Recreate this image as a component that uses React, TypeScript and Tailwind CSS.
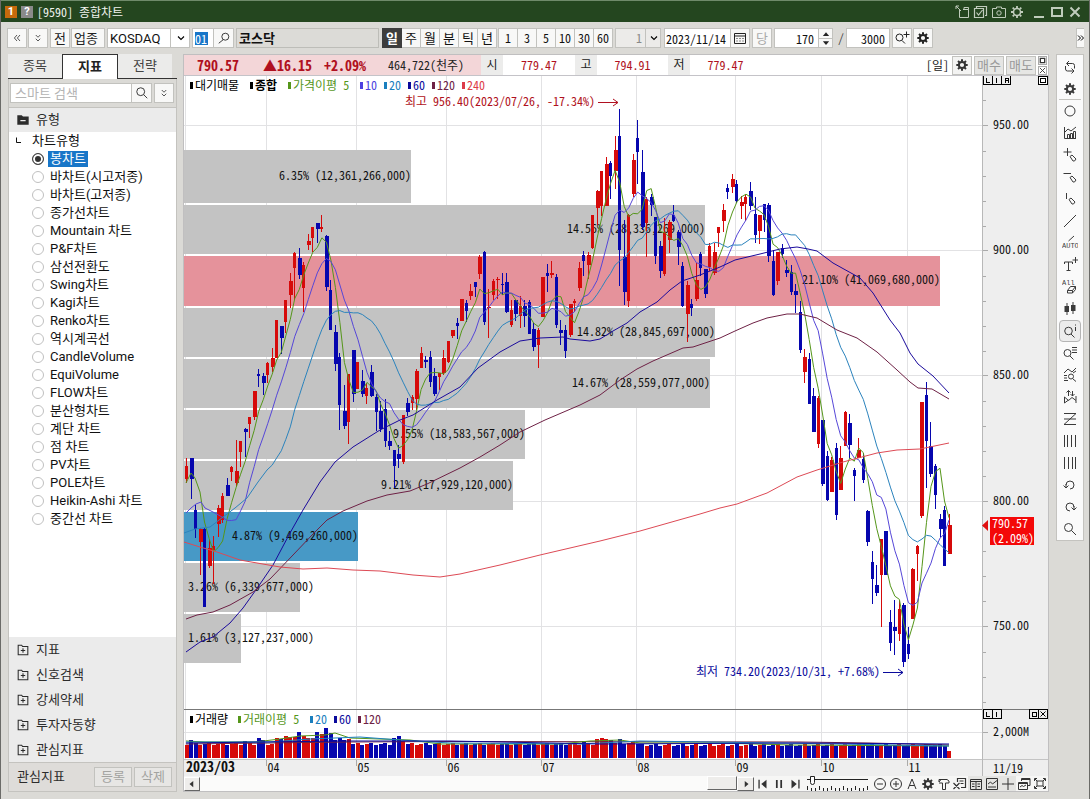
import React from "react";

type Candle = [up: 0 | 1, top: number, bottom: number, high: number, low: number];
type Point = [number, number];

const FIRST_X = 186.5;
const STEP = 4.512;
const xAt = (i: number) => FIRST_X + i * STEP;

const candles: Candle[] = [
  [1, 466, 479, 458, 483], [0, 458, 479, 458, 499], [0, 510, 529, 505, 538], [1, 529, 542, 528, 575], [0, 529, 607, 528, 607],
  [1, 548, 566, 540, 568], [1, 546, 550, 536, 584], [1, 508, 524, 505, 537], [1, 496, 520, 493, 523], [0, 485, 496, 478, 496],
  [1, 467, 472, 466, 481], [1, 471, 483, 440, 486], [1, 441, 452, 441, 467], [0, 429, 432, 428, 457], [1, 417, 424, 417, 438],
  [1, 391, 417, 391, 420], [0, 374, 376, 369, 387], [0, 376, 383, 373, 395], [1, 363, 375, 362, 383], [1, 358, 367, 348, 372],
  [1, 320, 358, 320, 358], [0, 326, 338, 326, 354], [1, 300, 322, 300, 333], [1, 281, 295, 273, 308], [1, 253, 268, 252, 300],
  [0, 258, 275, 248, 279], [1, 265, 288, 262, 312], [1, 241, 245, 234, 250], [1, 227, 238, 227, 252], [0, 223, 229, 223, 243],
  [1, 227, 229, 215, 232], [0, 236, 287, 235, 291], [0, 290, 330, 280, 330], [0, 332, 364, 325, 371], [0, 357, 405, 353, 430],
  [0, 411, 426, 385, 429], [1, 374, 422, 374, 444], [0, 350, 394, 350, 402], [1, 362, 389, 362, 389], [0, 381, 394, 370, 397],
  [1, 388, 396, 383, 404], [0, 372, 396, 365, 397], [0, 397, 412, 394, 431], [0, 411, 429, 401, 432], [0, 409, 441, 399, 447],
  [0, 441, 446, 431, 450], [0, 450, 466, 450, 488], [0, 454, 459, 445, 468], [1, 415, 462, 415, 464], [0, 403, 412, 398, 416],
  [1, 397, 403, 395, 410], [1, 371, 399, 369, 410], [1, 353, 368, 347, 368], [0, 360, 362, 356, 368], [0, 357, 382, 351, 387],
  [0, 376, 394, 368, 396], [1, 373, 377, 373, 390], [1, 358, 373, 350, 375], [1, 341, 362, 341, 363], [1, 330, 336, 330, 338],
  [0, 323, 326, 318, 339], [1, 299, 321, 299, 321], [0, 303, 311, 300, 322], [1, 291, 296, 284, 300], [0, 282, 287, 282, 297],
  [1, 257, 274, 255, 279], [0, 252, 322, 251, 325], [1, 307, 308, 289, 338], [1, 281, 295, 279, 300], [1, 279, 280, 277, 299],
  [0, 284, 285, 273, 295], [0, 282, 312, 273, 313], [1, 310, 325, 300, 327], [0, 300, 314, 300, 321], [1, 306, 316, 296, 328],
  [0, 306, 316, 300, 327], [0, 302, 334, 300, 334], [0, 329, 347, 323, 351], [1, 330, 345, 328, 368], [1, 277, 317, 277, 317],
  [0, 273, 276, 264, 292], [1, 273, 275, 261, 278], [0, 277, 325, 274, 328], [0, 330, 333, 320, 345], [0, 330, 351, 325, 358],
  [1, 304, 335, 304, 337], [1, 301, 303, 299, 312], [1, 268, 288, 262, 291], [0, 255, 261, 251, 276], [1, 255, 265, 252, 279],
  [1, 215, 248, 215, 249], [1, 191, 208, 190, 225], [1, 171, 206, 171, 216], [1, 164, 206, 157, 206], [0, 163, 176, 161, 199],
  [1, 150, 171, 136, 189], [0, 136, 250, 109, 286], [0, 257, 292, 220, 305], [1, 215, 301, 214, 307], [1, 160, 194, 154, 197],
  [0, 138, 152, 120, 184], [0, 172, 227, 150, 230], [1, 199, 223, 197, 257], [0, 197, 205, 194, 216], [0, 217, 256, 217, 264],
  [0, 246, 271, 241, 278], [1, 232, 274, 218, 276], [1, 222, 240, 220, 253], [0, 215, 221, 205, 222], [0, 232, 247, 230, 265],
  [0, 266, 306, 262, 307], [1, 285, 314, 281, 342], [0, 304, 308, 299, 316], [1, 280, 299, 263, 301], [0, 254, 268, 252, 276],
  [0, 269, 294, 269, 298], [1, 246, 267, 243, 271], [1, 252, 273, 243, 275], [1, 227, 233, 227, 247], [1, 210, 221, 204, 232],
  [0, 188, 192, 184, 199], [1, 179, 187, 174, 193], [0, 184, 201, 180, 203], [1, 202, 206, 196, 219], [1, 197, 204, 195, 221],
  [0, 191, 206, 182, 210], [0, 214, 235, 197, 243], [1, 215, 231, 215, 244], [0, 204, 220, 204, 232], [0, 205, 256, 203, 262],
  [0, 261, 295, 250, 296], [1, 252, 281, 252, 285], [0, 248, 254, 244, 258], [0, 270, 273, 260, 277], [0, 272, 292, 265, 295],
  [0, 291, 295, 284, 313], [0, 312, 350, 301, 353], [1, 357, 372, 349, 383], [0, 359, 404, 353, 404], [0, 396, 432, 388, 432],
  [1, 398, 444, 396, 448], [0, 420, 484, 420, 486], [0, 456, 500, 451, 501], [1, 460, 492, 457, 492], [0, 448, 515, 443, 520],
  [1, 458, 490, 446, 490], [1, 412, 446, 411, 446], [0, 423, 445, 414, 459], [0, 470, 476, 468, 501], [1, 450, 458, 438, 458],
  [0, 459, 480, 453, 483], [0, 511, 542, 510, 546], [0, 562, 579, 551, 604], [0, 585, 593, 565, 596], [1, 539, 575, 539, 627],
  [0, 531, 575, 531, 575], [0, 622, 643, 610, 651], [0, 627, 631, 600, 655], [1, 609, 634, 600, 641], [0, 605, 662, 603, 667],
  [0, 644, 654, 627, 659], [1, 569, 619, 568, 619], [1, 546, 554, 545, 581], [1, 402, 516, 402, 518], [0, 395, 441, 382, 488],
  [0, 446, 474, 422, 477], [0, 466, 495, 464, 509], [0, 519, 529, 514, 537], [0, 510, 566, 506, 566], [1, 525, 554, 514, 554],
];

const closes = candles.map(([up, top, bottom]) => (up ? top : bottom));

function average(period: number, lead: Point[]): Point[] {
  const pts: Point[] = [...lead];
  for (let i = period - 1; i < closes.length; i++) {
    const part = closes.slice(i - period + 1, i + 1);
    pts.push([xAt(i), part.reduce((a, b) => a + b, 0) / period]);
  }
  return pts;
}

const ma5 = average(5, [[186, 483], [191, 473], [195, 478], [200, 492]]);
const ma10 = average(10, [[186, 513], [191, 508], [196, 504], [201, 502], [205, 508], [213, 512], [222, 517]]);
const ma20 = average(20, [[184, 533], [195, 529], [210, 527], [223, 517], [235, 508], [247, 498], [258, 482], [267, 470]]);
const ma60: Point[] = [
  [186, 652], [200, 642], [213, 637], [230, 623], [243, 608], [258, 587], [273, 565], [290, 533], [303, 510], [320, 482], [335, 462],
  [353, 447], [380, 430], [400, 420], [413, 415], [437, 400], [460, 387], [478, 368], [500, 352], [520, 341], [540, 338], [563, 337],
  [570, 339], [590, 341], [600, 339], [613, 331], [627, 323], [640, 312], [657, 302], [670, 290], [682, 281], [700, 275], [720, 267],
  [735, 260], [760, 254], [780, 249], [797, 247], [808, 249], [817, 251], [833, 263], [860, 278], [873, 293], [890, 320], [900, 333],
  [910, 353], [918, 364], [933, 376], [949, 393],
];
const ma120: Point[] = [
  [186, 619], [197, 615], [213, 612], [230, 605], [253, 592], [270, 579], [293, 555], [313, 534], [327, 520], [343, 511], [367, 501],
  [387, 495], [410, 491], [427, 484], [460, 468], [480, 457], [500, 445], [520, 432], [545, 420], [580, 405], [600, 395], [620, 380],
  [637, 369], [653, 361], [683, 348], [693, 347], [720, 338], [735, 331], [753, 323], [767, 318], [787, 314], [800, 314], [817, 318],
  [837, 330], [857, 338], [877, 352], [897, 370], [910, 382], [918, 388], [932, 389], [949, 399],
];
const ma240: Point[] = [
  [184, 542], [200, 547], [217, 552], [240, 560], [257, 563], [280, 567], [303, 569], [327, 568], [353, 570], [380, 571], [413, 575],
  [440, 577], [460, 574], [500, 565], [540, 555], [600, 541], [640, 531], [700, 514], [720, 508], [737, 504], [767, 493], [797, 477],
  [817, 470], [843, 462], [877, 453], [897, 450], [920, 449], [949, 443],
];

const profile = [
  { y: 150, h: 53, end: 411, color: "#c3c3c3", text: "6.35% (12,361,266,000)" },
  { y: 205, h: 49, end: 705, color: "#c3c3c3", text: "14.56% (28,336,269,000)" },
  { y: 256, h: 50, end: 940, color: "#e5929b", text: "21.10% (41,069,680,000)" },
  { y: 308, h: 49, end: 715, color: "#c3c3c3", text: "14.82% (28,845,697,000)" },
  { y: 359, h: 49, end: 710, color: "#c3c3c3", text: "14.67% (28,559,077,000)" },
  { y: 410, h: 49, end: 525, color: "#c3c3c3", text: "9.55% (18,583,567,000)" },
  { y: 461, h: 49, end: 513, color: "#c3c3c3", text: "9.21% (17,929,120,000)" },
  { y: 512, h: 49, end: 358, color: "#4799c6", text: "4.87% (9,469,260,000)" },
  { y: 563, h: 49, end: 300, color: "#c3c3c3", text: "3.26% (6,339,677,000)" },
  { y: 614, h: 49, end: 241, color: "#c3c3c3", text: "1.61% (3,127,237,000)" },
];

const months: [number, string][] = [
  [266.5, "04"], [356.5, "05"], [446.5, "06"], [541.5, "07"], [636.5, "08"], [735.5, "09"], [821.5, "10"], [907.5, "11"],
];
const prices: [number, string][] = [[125.5, "950.00"], [250.5, "900.00"], [375.5, "850.00"], [501.5, "800.00"], [626.5, "750.00"]];

const tallVolumes: Record<number, number> = {
  1: 18, 13: 17, 16: 20, 17: 18, 20: 20, 21: 19, 22: 22, 23: 21, 24: 21, 25: 26, 26: 22, 27: 20, 28: 20, 29: 26, 30: 24, 31: 30,
  32: 25, 33: 18, 34: 20, 35: 18, 36: 19, 46: 20, 47: 22, 48: 17, 88: 17, 91: 19, 92: 20, 93: 19, 94: 18, 96: 19, 99: 17, 169: 7,
};
const volumeAt = (i: number) => tallVolumes[i] ?? 13 + ((i * 7 + (i % 5) * 3) % 3) - (i > 100 ? 1 : 0);

const toPath = (pts: Point[]) => pts.map(([x, y]) => `${x.toFixed(1)},${y.toFixed(1)}`).join(" ");

const HANGUL = "font-['Roboto','Noto_Sans_CJK_KR',sans-serif]";
const MONO = "font-['Noto_Sans_Mono_CJK_KR','Liberation_Sans_Narrow','Noto_Sans_CJK_KR',monospace]";

function Line({ pts, color }: { pts: Point[]; color: string }) {
  return <polyline points={toPath(pts)} fill="none" stroke={color} strokeWidth="1" />;
}

function Legend({ x, y, items }: { x: number; y: number; items: [number, string, string, boolean?][] }) {
  return (
    <>
      {items.map(([dx, color, label, bold]) => (
        <g key={label} fill={color}>
          <rect x={x + dx} y={y - 8} width="3" height="7" />
          <text x={x + dx + 5} y={y} fontWeight={bold ? 700 : 400}>{label}</text>
        </g>
      ))}
    </>
  );
}

function Chart() {
  const minor: number[] = [];
  for (let k = 0; k < 25; k++) if (k % 5 !== 1) minor.push(Math.round(100.4 + k * 25.05) + 0.5);
  return (
    <svg viewBox="184 76 864 700" className={`block h-auto w-full text-[12px] ${MONO}`} role="img" aria-label="코스닥 일봉 차트">
      <rect x="184" y="76" width="864" height="700" fill="#fff" />
      <rect x="983" y="76" width="65" height="700" fill="#eeeeee" />
      <rect x="184" y="759" width="864" height="17" fill="#eeeeee" />
      <g shapeRendering="crispEdges" stroke="#e2e2e4">
        {prices.map(([y]) => <line key={y} x1="184" x2="982" y1={y} y2={y} />)}
        <line x1="184" x2="982" y1="732.5" y2="732.5" />
        {months.map(([x]) => <line key={x} x1={x} x2={x} y1="76" y2="759" />)}
        <line x1="185.5" x2="185.5" y1="76" y2="759" />
      </g>
      <g shapeRendering="crispEdges">
        {profile.map((p) => <rect key={p.y} x="184" y={p.y} width={p.end - 184} height={p.h} fill={p.color} />)}
      </g>
      <g fill="#111">
        {profile.map((p) =>
          p.end < 320
            ? <text key={p.y} x="188" y={p.y + 28}>{p.text}</text>
            : <text key={p.y} x={p.end} y={p.y + (p.y === 150 ? 30 : 28)} textAnchor="end">{p.text}</text>
        )}
      </g>
      <g shapeRendering="crispEdges">
        {candles.map(([up, top, bottom, high, low], i) => {
          const x = Math.round(xAt(i) - 0.5);
          return (
            <g key={i} fill={up ? "#d60a0a" : "#0606ae"}>
              <rect x={x} y={high} width="1" height={low - high} />
              <rect x={x - 1} y={top} width={i % 2 ? 4 : 3} height={Math.max(1, bottom - top)} />
            </g>
          );
        })}
      </g>
      <Line pts={ma5} color="#55961a" />
      <Line pts={ma10} color="#5647d8" />
      <Line pts={ma20} color="#2b83bd" />
      <Line pts={ma60} color="#1a0a9c" />
      <Line pts={ma120} color="#6e2145" />
      <Line pts={ma240} color="#dd4a55" />

      <Legend x={190} y={90} items={[
        [0, "#000", "대기매물"], [60, "#000", "종합", true], [98, "#55961a", "가격이평 5"], [170, "#4d3fe0", "10"],
        [194, "#1b7fbe", "20"], [218, "#0a0a9c", "60"], [242, "#6e2145", "120"], [272, "#dd3c48", "240"],
      ]} />
      <text x="405" y="106" fill="#b01020">최고 956.40(2023/07/26, -17.34%)</text>
      <path d="M598 102.5H618M613 99l5 3.500l-5 3.500" fill="none" stroke="#b01020" />
      <text x="696" y="676" fill="#0a0a9c">최저 734.20(2023/10/31, +7.68%)</text>
      <path d="M883 672.500H903M898 669l5 3.500l-5 3.500" fill="none" stroke="#0a0a9c" />

      <g shapeRendering="crispEdges">
        {candles.map(([up], i) => (
          <rect key={i} x={Math.round(xAt(i)) - 2} y={758 - volumeAt(i)} width="4" height={volumeAt(i)} fill={up ? "#d60a0a" : "#0606ae"} />
        ))}
      </g>
      <Line color="#6e2145" pts={[[186, 744], [350, 742], [450, 741.5], [800, 742], [870, 743], [949, 745]]} />
      <Line color="#55961a" pts={[[186, 741], [205, 742], [255, 742], [280, 739], [300, 736], [325, 735], [335, 733], [350, 738], [380, 739], [410, 740], [440, 744], [560, 744], [590, 741], [620, 740], [640, 743], [720, 743], [790, 745], [949, 746]]} />
      <Line color="#1b7fbe" pts={[[186, 742], [270, 742], [310, 739], [360, 737], [400, 740], [450, 743], [580, 744], [640, 741], [780, 743], [949, 746]]} />
      <Line color="#0a0a9c" pts={[[186, 743], [340, 741], [450, 741], [600, 744], [800, 743], [949, 744]]} />
      <g shapeRendering="crispEdges" stroke="#777">
        <line x1="184" x2="1048" y1="709.5" y2="709.5" />
        <line x1="184" x2="1048" y1="759.5" y2="759.5" stroke="#c4c4c4" />
        <line x1="982.5" x2="982.5" y1="76" y2="776" stroke="#b8b8b8" />
        {prices.map(([y]) => <line key={y} x1="983" x2="988" y1={y} y2={y} stroke="#aaa" />)}
        {minor.map((y) => <line key={y} x1="983" x2="986" y1={y} y2={y} stroke="#aaa" />)}
        <line x1="983" x2="988" y1="732.5" y2="732.5" stroke="#aaa" />
        {months.map(([x]) => <line key={x} x1={x} x2={x} y1="760" y2="766" stroke="#aaa" />)}
      </g>
      <Legend x={190} y={724} items={[
        [0, "#000", "거래량"], [48, "#55961a", "거래이평 5"], [120, "#1b7fbe", "20"], [144, "#0a0a9c", "60"], [168, "#6e2145", "120"],
      ]} />
      <g fill="#111">
        {prices.map(([y, label]) => <text key={label} x="993" y={y + 3.500}>{label}</text>)}
        <text x="993" y="736">2,000M</text>
        <text x="993" y="773">11/19</text>
        <text x="186" y="772" className="text-[14px]" fontWeight="700">2023/03</text>
        {months.map(([x, label]) => <text key={label} x={x + 1} y="772">{label}</text>)}
      </g>
      <rect x="990" y="517" width="44" height="28" fill="#f40808" />
      <path d="M988 520v11l-6-5.500z" fill="#e01010" />
      <text fill="#fff">
        <tspan x="992" y="528">790.57</tspan>
        <tspan x="992" y="543">(2.09%)</tspan>
      </text>
      <g fill="none" stroke="#000" shapeRendering="crispEdges">
        <path d="M983.500 75.500h27v9h-27zM992.500 76v9M1001.500 76v9M986.500 78v4h3M996.500 78v5M1005.500 83v-5h3v2h-3M1008.500 81v2" />
        <path fill="#fff" d="M1038.500 76.500h9v8h-9z" />
        <path d="M1040.500 78.500h5v4h-5z" />
        <path d="M983.500 709.500h18v9h-18zM992.500 710v9M986.500 712v4h3M996.500 712v5" />
        <path d="M1029.500 709.500h18v9h-18zM1038.500 710v9M1032.500 712.500h4v4h-4z" />
        <path shapeRendering="auto" d="M1040.500 711.500l5 5M1045.500 711.500l-5 5" />
      </g>
    </svg>
  );
}

function Icon({ d, fill, size = 16, sw = 1, children }: { d?: string; fill?: string; size?: number; sw?: number; children?: React.ReactNode }) {
  return (
    <svg width={size} height={size} viewBox="0 0 16 16" fill="none" stroke="currentColor" strokeWidth={sw} className="shrink-0" aria-hidden="true">
      {d && <path d={d} />}
      {fill && <path d={fill} fill="currentColor" stroke="none" />}
      {children}
    </svg>
  );
}

function Gear({ size = 16 }: { size?: number }) {
  return (
    <Icon size={size}>
      <circle cx="8" cy="8" r="3.1" strokeWidth="2" />
      <path strokeWidth="2" d="M8 2.300v2M8 11.700v2M2.300 8h2M11.700 8h2M4 4l1.400 1.400M10.600 10.600L12 12M12 4l-1.400 1.400M5.400 10.600L4 12" />
    </Icon>
  );
}

const BTN = "flex h-5 items-center justify-center border border-[#c2c2be] bg-[#f8f8f7] text-[#222]";

const Mini = ({ children, y = 5.5 }: { children: string; y?: number }) => (
  <text x="0" y={y} fontSize="7" fontFamily="Liberation Mono" fill="currentColor" stroke="none">{children}</text>
);

const sideTools: [string, React.ReactNode][] = [
  ["새로고침", <Icon key="i" d="M5 4.500h5.500a2 2 0 0 1 2 2v3M11 12H5.500a2 2 0 0 1-2-2V7M7 2L4.500 4.500L7 7M9.500 9.500L12 12l-2.500 2.500" />],
  ["설정", <Gear key="i" />],
  ["원", <Icon key="i"><circle cx="8" cy="8" r="5" /></Icon>],
  ["차트", <Icon key="i" d="M2.500 2v11.500H14M3 7l3-3l3 2l5-4M5.500 13V9.500h2V13M8.500 13V8.500h2V13M11.500 13V6.500h2V13" />],
  ["십자선", <Icon key="i" d="M5.500 1v8M1.500 5H9.500M8 9.500l2-1.500l4 4l-1.500 2h-1.500z" />],
  ["수평선", <Icon key="i" d="M1.500 4.500H9M8 8.500l2-1.500l4 4l-1.500 2h-1.500z" />],
  ["수직선", <Icon key="i" d="M4.500 2v6M7 8.500l2-1.500l4 4l-1.500 2h-1.500z" />],
  ["추세선", <Icon key="i" d="M2 14L14 2" />],
  ["자동추세선", <Icon key="i" d="M6.500 6L12 1"><Mini y={13}>AUTO</Mini></Icon>],
  ["문자", <Icon key="i" d="M2.500 7V5h8v2M6.500 5v8M4.500 13.500h4M13.500 0v6M10.500 3h6" />],
  ["전체삭제", <Icon key="i" d="M5.500 11.500l3-4h5l-3 4zM5.500 11.500v2.500h5v-2.500M10.500 14l3-3.500V7.500"><Mini>All</Mini></Icon>],
  ["봉", <Icon key="i" d="M5 2v12M11 1v12" fill="M2.500 5h4.500v6H2.500zM9 4h4.500v6H9z" />],
  ["정보", <Icon key="i" d="M9 11l3.500 3.500M13.500 4v4M13.500 1.500v1"><circle cx="6.500" cy="8" r="3.800" /></Icon>],
  ["목록보기", <Icon key="i" d="M8 11l3.500 3.500M10 2.500h5M10 5h5M10 7.500h5"><circle cx="5.500" cy="8" r="3.500" /></Icon>],
  ["지표검색", <Icon key="i" d="M2 6l4-4l4 3l4-4M2 8.500h3M2 11h3M2 13.500h4M11 12l3 2.500M11 6l3-2"><circle cx="9" cy="9.500" r="2.500" /></Icon>],
  ["비교", <Icon key="i" d="M2.500 14V8l4 3.500l3.500-3l4 3V7M2.500 14l4-3M6.500 7V1.500M4.500 3.500l2-2l2 2M10.500 2v5M8.500 5l2 2l2-2M14 11.500V14" />],
  ["분할", <Icon key="i" d="M2 2.500h12L2 13.500h12M2 8h12" />],
  ["세로선1", <Icon key="i" d="M2.500 2v12M5.500 2v12M9.500 2v12M13.500 2v12" />],
  ["세로선2", <Icon key="i" d="M2.500 2v12M6.500 2v12M10.500 2v12M13.500 2v12" />],
  ["되돌리기", <Icon key="i" d="M4 8a4 4 0 1 1 4 4M1.500 8.500l2.500 2.500l2.500-2.500M4 11V7" />],
  ["다시하기", <Icon key="i" d="M12 8a4 4 0 1 0-4 4M9.500 8.500l2.500 2.500l2.500-2.500M12 11V7" />],
  ["확대", <Icon key="i" d="M9.500 9.500L14 14"><circle cx="6.500" cy="6.500" r="4" /></Icon>],
];

const chartTypes = [
  "봉차트", "바차트(시고저종)", "바차트(고저종)", "종가선차트", "Mountain 차트", "P&F차트", "삼선전환도", "Swing차트", "Kagi차트", "Renko차트",
  "역시계곡선", "CandleVolume", "EquiVolume", "FLOW차트", "분산형차트", "계단 차트", "점 차트", "PV차트", "POLE차트", "Heikin-Ashi 차트", "중간선 차트",
];

const bottomIcons: [string, React.ReactNode, boolean?][] = [
  ["축소", <Icon key="i" d="M5 8h6"><circle cx="8" cy="8" r="5.500" /></Icon>],
  ["확대", <Icon key="i" d="M5 8h6M8 5v6"><circle cx="8" cy="8" r="5.500" /></Icon>],
  ["글자", <Icon key="i" d="M4 13L8 3l4 10M5.500 9.500h5" />],
  ["설정", <Gear key="i" />],
  ["도구", <Icon key="i" d="M3 6V3.500h8l2 1.500v2H9.500v6.500h-3V7H3M5 3.500L3 6" />],
  ["내보내기", <Icon key="i" d="M5.500 6V2.500h8v9H9M1.500 7l6 6M7.500 7l-6 6M7.500 5h4M8.500 7.500h3" sw={1.2} />],
  ["표", <Icon key="i" d="M2.500 3.500h11v10h-11zM2.500 5.500h11M8 5v8M4 8h2.500M4 10.500h2.500M9.500 8H12M9.500 10.500H12" />, true],
  ["차트창", <Icon key="i" d="M2.500 2.500h11v11h-11zM4 8l2.500-2l2 2L13 4.500M4 11h8" />, true],
  ["십자", <Icon key="i" d="M8 2v12M2 8h12" />, true],
  ["겹치기", <Icon key="i" d="M5.500 5V2.500h8.500v7h-2M5.500 3.500H14M2.500 6.500h9v7h-9zM2.500 7.500h9M4 11l2-1.500l1.500 1L10 9" />],
  ["전체화면", <Icon key="i" d="M2.500 5V2.500H5M11 2.500h2.500V5M13.500 10v2.500H11M5 12.500H2.500V10M5 5h6v5H5zM3 3l2 2M13 3l-2 2M3 12l2-2M13 12l-2-2" />],
];

function TitleBar() {
  return (
    <header className="flex h-[22px] items-center gap-1 border-t border-[#6f8a6a] bg-[#24461f] pl-[4px] pr-[6px] text-[#c0ccbc]">
      <span className="flex h-3 w-3 items-center justify-center bg-[#c66a0c] text-[11px] font-bold leading-none text-white">1</span>
      <span className="flex h-3 w-3 items-center justify-center bg-[#8a8a8a] text-[11px] font-bold leading-none text-white">?</span>
      <h1 className={`text-[12px] leading-5 text-[#f0f3ee] ${MONO}`}>[9590] 종합차트</h1>
      <div className="ml-auto flex items-center gap-[2px]">
        <button aria-label="창 분리"><Icon d="M5.500 6v7.500h9v-8H9M10 5.500v-2h4.500v2M2 2l5 5M2 5V2h3" /></button>
        <button aria-label="복사"><Icon d="M4.500 4V2.500h10v9H13M2.500 4.500h9v9h-9zM4.500 8.500l2 2.500l4-5" sw={1.2} /></button>
        <button aria-label="화면 캡처" className="ml-[1px]"><Icon d="M1.500 4.500h4V3h5v1.500h4v9h-13z"><circle cx="8" cy="9" r="2.200" /></Icon></button>
        <button aria-label="화면 설정">
          <Icon><circle cx="8" cy="8" r="3.500" strokeWidth="1.500" /><path strokeWidth="1.800" d="M8 2v2M8 12v2M2 8h2M12 8h2M3.700 3.700l1.500 1.500M10.800 10.800l1.500 1.500M12.300 3.700l-1.500 1.500M5.200 10.800l-1.500 1.500" /></Icon>
        </button>
        <button aria-label="최소화" className="ml-1"><Icon d="M3 13h10" sw={2} /></button>
        <button aria-label="최대화"><Icon d="M3 4h10v8H3z" sw={2} /></button>
        <button aria-label="닫기"><Icon d="M3.500 3.500l9 9M12.500 3.500l-9 9" sw={2} /></button>
      </div>
    </header>
  );
}

function Chevron() {
  return <Icon size={12} d="M4 6l4 4l4-4" sw={1.500} />;
}

function Toolbar() {
  return (
    <div className="flex items-center pl-[6px] pt-[6px] text-[13px] leading-none">
      <button className={`${BTN} w-5`} aria-label="왼쪽 접기"><Icon size={12} d="M8 4L4.500 8L8 12M12 4L8.500 8l3.500 4" /></button>
      <button className={`${BTN} ml-[1px] w-5`} aria-label="펼치기"><Icon size={12} d="M5 4l3 3l3-3M5 9l3 3l3-3" /></button>
      <button className={`${BTN} ml-[2px] w-5`}>전</button>
      <button className={`${BTN} ml-[1px] w-[34px] pr-1`}>업종</button>
      <label className="relative ml-[2px] flex">
        <select aria-label="시장" className="h-5 w-[83px] appearance-none border border-[#c2c2be] bg-white pl-[2px] text-[13px] text-[#111]">
          <option>KOSDAQ</option>
        </select>
        <span className="pointer-events-none absolute right-0 top-0 flex h-5 w-5 items-center justify-center border-l border-[#c2c2be]"><Chevron /></span>
      </label>
      <label className="ml-[2px] flex h-5 w-[22px] items-center border border-[#c2c2be] bg-white pl-[2px]">
        <input aria-label="업종 코드" defaultValue="01" className={`w-[13px] bg-[#1876c8] text-[12px] leading-[13px] text-white outline-none ${MONO}`} />
      </label>
      <button className={`${BTN} w-5 border-l-0`} aria-label="종목 찾기"><Icon size={14} d="M7 10L2 14"><circle cx="9.500" cy="6.500" r="4" /></Icon></button>
      <output className="ml-[2px] flex h-5 w-[143px] items-center border border-[#bdbdb8] bg-[#dcdbd7] pl-[2px] font-bold text-[#111]">코스닥</output>
      <div className="ml-[3px] flex">
        {["일", "주", "월", "분", "틱", "년"].map((t, i) => (
          <button key={t} aria-pressed={i === 0} className={i === 0 ? "h-5 w-5 bg-[#3d3d3d] font-bold text-white" : "h-5 w-[19px] border-y border-r border-[#c2c2be] bg-[#f8f8f7] text-[#111]"}>{t}</button>
        ))}
      </div>
      <div className={`ml-[1px] flex border-l border-[#c2c2be] text-[12px] ${MONO}`}>
        {["1", "3", "5", "10", "30", "60"].map((t) => (
          <button key={t} className="h-5 w-[19px] border-y border-r border-[#c2c2be] bg-[#f8f8f7] text-[#111]">{t}</button>
        ))}
      </div>
      <label className={`relative ml-[2px] flex text-[12px] ${MONO}`}>
        <select aria-label="분 단위" disabled className="h-5 w-[46px] appearance-none border border-[#c2c2be] bg-[#ecebe9] pl-[20px] text-[#888] opacity-100"><option>1</option></select>
        <span className="pointer-events-none absolute right-0 top-0 flex h-5 w-4 items-center justify-center border-l border-[#c2c2be]"><Chevron /></span>
      </label>
      <input aria-label="날짜" defaultValue="2023/11/14" className={`ml-[3px] h-5 w-[67px] border border-[#c2c2be] bg-white pl-[1px] text-[12px] text-[#111] ${MONO}`} />
      <button className={`${BTN} w-[19px] border-l-0`} aria-label="달력"><Icon d="M2.500 3.500h11v10h-11zM2.500 6h11M4.500 8.500h1M7.500 8.500h1M10.500 8.500h1M4.500 11h1M7.500 11h1M10.500 11h1" /></button>
      <button disabled className={`${BTN} ml-[2px] w-5 text-[#aaa]`}>당</button>
      <div className={`ml-[2px] flex text-[12px] ${MONO}`}>
        <input aria-label="표시 봉수" defaultValue="170" className="h-5 w-[45px] border border-[#c2c2be] bg-white pr-1 text-right text-[#111]" />
        <span className="flex w-[14px] flex-col border-y border-r border-[#c2c2be] bg-[#f8f8f7] text-[#222]">
          <button aria-label="늘리기" className="flex h-[9px] items-center justify-center"><Icon size={10} fill="M3 11h10L8 5z" /></button>
          <button aria-label="줄이기" className="flex h-[9px] items-center justify-center border-t border-[#c2c2be]"><Icon size={10} fill="M3 5h10L8 11z" /></button>
        </span>
        <span className="w-[13px] self-center pl-[5px] text-[#444]">/</span>
        <input aria-label="전체 봉수" defaultValue="3000" className="h-5 w-[44px] border border-[#c2c2be] bg-white pr-1 text-right text-[#111]" />
      </div>
      <button className={`${BTN} ml-[2px] w-5`} aria-label="확대 조회"><Icon d="M8 10.500l3 3M12.500 1.500v6M9.500 4.500h6"><circle cx="5.500" cy="7.500" r="3.500" /></Icon></button>
      <button className={`${BTN} ml-[1px] w-5`} aria-label="차트 설정"><Gear /></button>
      <button className="ml-auto mr-[5px] flex h-5 w-2 items-center justify-center border border-r-0 border-[#c2c2be] bg-[#f8f8f7]" aria-label="더보기"><Icon size={8} d="M2 3l5 5l-5 5M8 3l5 5l-5 5" sw={2} /></button>
    </div>
  );
}

function FolderPlus() {
  return <Icon size={14} d="M2.500 2.500h4l1 1.500h6v9.500h-11zM8 6v5M5.500 8.500h5" sw={1.200} />;
}

function SidePanel() {
  return (
    <aside className="flex w-[169px] shrink-0 flex-col text-[13px] leading-[18px] text-[#2c2c2c]">
      <div role="tablist" className="flex h-[25px]">
        <button role="tab" className="w-[54px] border-b border-[#333] bg-[#ebebea] text-[#444]">종목</button>
        <button role="tab" aria-selected="true" className="w-[56px] border-x border-t border-[#333] bg-white font-bold text-[#222]">지표</button>
        <button role="tab" className="w-[54px] border-b border-[#333] bg-[#ebebea] text-[#444]">전략</button>
        <span className="flex-1 border-b border-[#333]" />
      </div>
      <div className="flex flex-1 flex-col border-x border-b border-[#c4c3bf]">
        <div className="flex pb-[4px] pl-[1px] pt-[4px]">
          <input aria-label="스마트 검색" placeholder="스마트 검색" className="h-5 w-[122px] border border-[#c2c2be] bg-white pl-[4px] placeholder:text-[#b4b4b4]" />
          <button className={`${BTN} w-5 border-l-0`} aria-label="검색"><Icon size={14} d="M10 10l4 4"><circle cx="6.500" cy="6.500" r="4.500" /></Icon></button>
          <button className={`${BTN} ml-[2px] w-5`} aria-label="펼치기"><Icon size={12} d="M5 4l3 3l3-3M5 9l3 3l3-3" /></button>
        </div>
        <h2 className="flex h-[25px] items-center gap-[6px] border-t border-[#c4c3bf] bg-[#ebebeb] pl-[7px]">
          <Icon size={14} fill="M1.500 2.500h5l1.500 1.500h6.500v9.500h-13zM5 8v1.500h6V8z" />유형
        </h2>
        <fieldset className="flex-1 bg-white">
          <legend className="flex h-[18px] w-full items-center bg-white pl-[6px] text-[#111]">
            <Icon size={8} d="M3 1v10h9" sw={2} /><span className="pl-[9px]">차트유형</span>
          </legend>
          {chartTypes.map((t, i) => (
            <label key={t} className="flex h-[18px] items-center gap-[4px] pl-[23px] text-[#111]">
              <input type="radio" name="chart-type" defaultChecked={i === 0} className="peer h-3 w-3 shrink-0 appearance-none rounded-full border border-[#c0c0c0] bg-white checked:border-[#444] checked:bg-[#333] checked:shadow-[inset_0_0_0_2px_#fff]" />
              <span className="px-[2px] leading-4 peer-checked:bg-[#1876c8] peer-checked:text-white">{t}</span>
            </label>
          ))}
        </fieldset>
        <nav className="bg-[#ebebeb]">
          {["지표", "신호검색", "강세약세", "투자자동향", "관심지표"].map((t) => (
            <button key={t} className="flex h-[25px] w-full items-center gap-[6px] pl-[7px]"><FolderPlus />{t}</button>
          ))}
        </nav>
        <div className="flex h-[29px] items-center border-t border-[#c4c3bf] bg-[#dedcd9] pl-2 pr-1">
          <span className="flex-1">관심지표</span>
          <button disabled className="h-5 w-[38px] border border-[#c2c2be] bg-[#e7e6e4] text-[#a3a3a0]">등록</button>
          <button disabled className="ml-[2px] h-5 w-[38px] border border-[#c2c2be] bg-[#e7e6e4] text-[#a3a3a0]">삭제</button>
        </div>
      </div>
    </aside>
  );
}

function QuoteRow() {
  const cell = "flex h-full w-[22px] items-center justify-center bg-[#ececeb] text-[#222]";
  return (
    <div className="flex h-[21px] items-center border-b border-[#c4c3c8] bg-white text-[12px] leading-none text-[#b01020]">
      <div className={`flex h-full w-[297px] items-center bg-[#f3d6d8] pl-[13px] ${MONO}`}>
        <span className="w-[66px] text-[14px] font-bold">790.57</span>
        <span className="w-[61px] text-[14px] font-bold">▲16.15</span>
        <span className="w-[64px] text-[14px] font-bold">+2.09%</span>
        <span className="text-[#222]">464,722(천주)</span>
      </div>
      <span className={cell}>시</span>
      <span className={`w-[72px] text-center ${MONO}`}>779.47</span>
      <span className={cell}>고</span>
      <span className={`w-[71px] text-center ${MONO}`}>794.91</span>
      <span className={cell}>저</span>
      <span className={`w-[71px] text-center ${MONO}`}>779.47</span>
      <span className={`ml-auto mr-[3px] text-[#222] ${MONO}`}>[일]</span>
      <button className="flex h-[19px] w-5 items-center justify-center border border-[#c2c2be] bg-[#f3f3f2] text-[#333]" aria-label="설정"><Gear /></button>
      <button className="ml-[2px] h-[19px] w-[30px] border border-[#c2c2be] bg-[#e6e6e4] text-[13px] text-[#999]">매수</button>
      <button className="ml-[2px] h-[19px] w-[30px] border border-[#c2c2be] bg-[#e6e6e4] text-[13px] text-[#999]">매도</button>
      <span className="ml-[2px] mr-[1px] flex w-[9px] flex-col gap-[1px] text-[#333]">
        <button aria-label="최대화" className="flex h-[9px] items-center justify-center border border-[#aaa]"><Icon size={7} d="M3 3h10v10H3z" sw={3} /></button>
        <button aria-label="닫기" className="flex h-[9px] items-center justify-center border border-[#aaa]"><Icon size={7} d="M2 2l12 12M14 2L2 14" sw={2} /></button>
      </span>
    </div>
  );
}

function BottomBar() {
  const scroll = "flex h-[14px] items-center justify-center border border-t-white border-l-white border-r-[#666] border-b-[#666] bg-[#eeedeb]";
  return (
    <div className="flex h-[15px] items-center bg-[#f6f6f5] text-[#333]">
      <button className={`${scroll} w-4`} aria-label="왼쪽으로"><Icon size={10} fill="M10 3v10L4 8z" /></button>
      <div className="flex h-full flex-1 justify-end bg-[#fbfbfa]"><span className={`${scroll} w-[30px]`} /></div>
      <button className={`${scroll} w-[17px]`} aria-label="오른쪽으로"><Icon size={10} fill="M6 3v10l6-5z" /></button>
      <button className="ml-[2px] w-4" aria-label="처음"><Icon size={14} d="M3.500 3v10" fill="M12 3v10L6 8z" sw={1.500} /></button>
      <button className="w-4" aria-label="일시정지"><Icon size={14} d="M5.500 3.500v9M10.500 3.500v9" sw={2} /></button>
      <button className="w-4" aria-label="끝"><Icon size={14} d="M12.500 3v10" fill="M4 3v10l6-5z" sw={1.500} /></button>
      <label className="relative ml-[3px] h-[15px] w-[62px]">
        <svg width="62" height="15" viewBox="0 0 62 15" stroke="#222" aria-hidden="true" className="block" shapeRendering="crispEdges">
          <path d="M0 3.500h61" />
          {Array.from({ length: 16 }, (_, i) => <path key={i} d={`M${i * 4 + 0.5} ${i % 3 ? 12 : 10}v4`} />)}
        </svg>
        <input type="range" aria-label="재생 속도" defaultValue={6} className="absolute inset-0 h-[9px] w-full appearance-none bg-transparent [&::-webkit-slider-thumb]:h-[9px] [&::-webkit-slider-thumb]:w-[5px] [&::-webkit-slider-thumb]:appearance-none [&::-webkit-slider-thumb]:rounded-b-full [&::-webkit-slider-thumb]:border [&::-webkit-slider-thumb]:border-[#222] [&::-webkit-slider-thumb]:bg-white" />
      </label>
      <div className="ml-[3px] flex">
        {bottomIcons.map(([label, icon, framed]) => (
          <button key={label} aria-label={label} className={`flex h-[15px] w-4 items-center justify-center ${framed ? "bg-[#e4e4e2]" : ""}`}>{icon}</button>
        ))}
      </div>
    </div>
  );
}

export default function App() {
  return (
    <div className={`flex min-h-screen flex-col border-x border-b border-[#6b6b68] bg-[#dbdad6] ${HANGUL}`}>
      <TitleBar />
      <Toolbar />
      <main className="flex flex-1 pb-[7px] pl-[7px] pr-[5px] pt-[6px]">
        <SidePanel />
        <section className="ml-[6px] min-w-0 flex-1 self-start border border-[#c0bfc0]">
          <QuoteRow />
          <Chart />
          <BottomBar />
        </section>
        <div role="toolbar" aria-label="차트 도구" className="ml-[7px] flex w-[28px] flex-col self-start border border-[#c4c3bf] bg-[#fafafa] pt-[1px] text-[#3a3a3a]">
          {sideTools.map(([label, icon], i) => (
            <button key={label} aria-label={label} className={`mx-[2px] flex h-[22px] items-center justify-center ${i === 12 ? "rounded border border-[#b4b4b4] bg-[#ececec]" : i === 1 ? "border-b border-[#c4c3bf]" : ""}`}>{icon}</button>
          ))}
        </div>
      </main>
    </div>
  );
}
